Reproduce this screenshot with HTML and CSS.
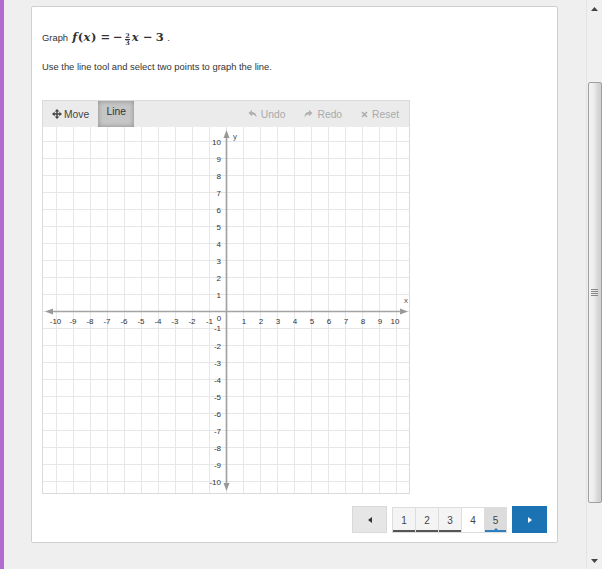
FILE: index.html
```html
<!DOCTYPE html>
<html>
<head>
<meta charset="utf-8">
<link rel="stylesheet" href="styles.css">
</head>
<body>
<div class="accent"></div>
<div class="main">
  <div class="card">
    <p class="q"><span>Graph</span> <span class="math"><i class="mi">f</i><span class="mo">(</span><i class="mi">x</i><span class="mo">)</span><span class="rel">=</span><span class="neg">−</span><span class="frac"><span class="num">2</span><span class="den">3</span></span><i class="mi">x</i><span class="bin">−</span><span class="mn">3</span></span> <span class="dot">.</span></p>
    <p class="instr">Use the line tool and select two points to graph the line.</p>
    <div class="graph">
      <div class="toolbar">
        <div class="tool tool-move">
          <svg class="ico" width="10" height="10" viewBox="0 0 10 10"><path d="M5 0L7.3 2.6H5.7V4.3H7.4V2.7L10 5L7.4 7.3V5.7H5.7V7.4H7.3L5 10L2.7 7.4H4.3V5.7H2.6V7.3L0 5L2.6 2.7V4.3H4.3V2.6H2.7Z" fill="#444"/></svg>
          <span>Move</span>
        </div>
        <div class="tool tool-line">Line</div>
        <div class="actions">
          <div class="act">
            <svg width="9" height="8" viewBox="0 0 9 8"><path d="M0.5 3L4 0V2C6.8 2 8.5 3.8 8.5 7.5C7.6 5.6 6.2 4.6 4 4.6V6.2Z" fill="#b0b0b0"/></svg>
            <span>Undo</span>
          </div>
          <div class="act">
            <svg width="9" height="8" viewBox="0 0 9 8"><path d="M8.5 3L5 0V2C2.2 2 0.5 3.8 0.5 7.5C1.4 5.6 2.8 4.6 5 4.6V6.2Z" fill="#b0b0b0"/></svg>
            <span>Redo</span>
          </div>
          <div class="act">
            <svg width="7" height="7" viewBox="0 0 7 7"><path d="M1 1L6 6M6 1L1 6" stroke="#aaa" stroke-width="1.5"/></svg>
            <span>Reset</span>
          </div>
        </div>
      </div>
      <svg class="plane" width="366" height="366" viewBox="0 0 366 366">
        <defs>
          <pattern id="grid" x="13" y="14" width="17" height="17" patternUnits="userSpaceOnUse">
            <path d="M0.5 0V17M0 0.5H17" stroke="#e7e7e7" stroke-width="1" fill="none"/>
          </pattern>
        </defs>
        <rect width="366" height="366" fill="url(#grid)"/>
        <path d="M8 184.5H359M183.5 9V358" stroke="#a4a4a4" stroke-width="1.7" fill="none"/>
        <polygon points="2,184.5 10,181.5 10,187.5" fill="#999"/>
        <polygon points="365,184.5 357,181.5 357,187.5" fill="#999"/>
        <polygon points="183.5,3 180.5,11 186.5,11" fill="#999"/>
        <polygon points="183.5,364 180.5,356 186.5,356" fill="#999"/>
        <g class="xl">
          <text x="12.5" y="197">-10</text>
          <text x="30" y="197">-9</text>
          <text x="47" y="197">-8</text>
          <text x="64" y="197">-7</text>
          <text x="81" y="197">-6</text>
          <text x="98" y="197">-5</text>
          <text x="115" y="197">-4</text>
          <text x="132" y="197">-3</text>
          <text x="149" y="197">-2</text>
          <text x="166.5" y="197">-1</text>
          <text x="201" y="197">1</text>
          <text x="218" y="197">2</text>
          <text x="235" y="197">3</text>
          <text x="252" y="197">4</text>
          <text x="269" y="197">5</text>
          <text x="286" y="197">6</text>
          <text x="303" y="197">7</text>
          <text x="320" y="197">8</text>
          <text x="337" y="197">9</text>
          <text x="352" y="197">10</text>
          <text x="176" y="194">0</text>
        </g>
        <g class="yl">
          <text x="178" y="17.5">10</text>
          <text x="178" y="34.5">9</text>
          <text x="178" y="51.5">8</text>
          <text x="178" y="68.5">7</text>
          <text x="178" y="85.5">6</text>
          <text x="178" y="102.5">5</text>
          <text x="178" y="119.5">4</text>
          <text x="178" y="136.5">3</text>
          <text x="178" y="153.5">2</text>
          <text x="178" y="170.5">1</text>
          <text x="178" y="204">-1</text>
          <text x="178" y="221.5">-2</text>
          <text x="178" y="238.5">-3</text>
          <text x="178" y="255.5">-4</text>
          <text x="178" y="272.5">-5</text>
          <text x="178" y="289.5">-6</text>
          <text x="178" y="306.5">-7</text>
          <text x="178" y="323.5">-8</text>
          <text x="178" y="340.5">-9</text>
          <text x="178" y="357.5">-10</text>
        </g>
        <text class="axl" x="361" y="176">x</text>
        <text class="axl" x="190" y="12">y</text>
      </svg>
    </div>
    <div class="pager">
      <div class="pbtn prev"><svg width="4" height="6" viewBox="0 0 4 6"><path d="M4 0V6L0 3Z" fill="#333"/></svg></div>
      <div class="pages">
        <div class="page done">1</div>
        <div class="page done">2</div>
        <div class="page done">3</div>
        <div class="page open">4</div>
        <div class="page current">5</div>
      </div>
      <div class="pbtn next"><svg width="4" height="6" viewBox="0 0 4 6"><path d="M0 0V6L4 3Z" fill="#fff"/></svg></div>
    </div>
  </div>
</div>
<div class="scrollbar">
  <div class="sb-arrow"><svg width="7" height="4" viewBox="0 0 7 4"><path d="M3.5 0L7 4H0Z" fill="#444"/></svg></div>
  <div class="sb-gap"></div>
  <div class="sb-thumb"><span class="grip"></span></div>
  <div class="sb-fill"></div>
  <div class="sb-arrow"><svg width="7" height="4" viewBox="0 0 7 4"><path d="M0 0H7L3.5 4Z" fill="#444"/></svg></div>
</div>
</body>
</html>
```

FILE: styles.css
```css
html, body {
  margin: 0;
  padding: 0;
}
body {
  display: flex;
  width: 602px;
  height: 569px;
  overflow: hidden;
  background: #efefef;
  font-family: "Liberation Sans", Arial, sans-serif;
  color: #333;
}
.accent {
  width: 4px;
  flex: none;
  background: #b36bcf;
}
.main {
  flex: 1;
  padding: 6px 0 0 27px;
}
.card {
  width: 527px;
  box-sizing: border-box;
  background: #fff;
  border: 1px solid #cfcfcf;
  border-radius: 2px;
  padding: 23px 10px 9px 10px;
}
.q {
  margin: 0;
  font-size: 9.4px;
  line-height: 14px;
  height: 14px;
  white-space: nowrap;
}
.math {
  font-family: "DejaVu Serif", "Liberation Serif", serif;
  font-weight: bold;
  font-size: 11.5px;
  line-height: 14px;
  margin-left: 1px;
}
.mi {
  font-style: italic;
  padding: 0 0.5px;
}
.mo {
  font-style: normal;
}
.rel {
  margin: 0 3px 0 4px;
}
.neg {
  margin-right: 1px;
}
.bin {
  margin: 0 3px 0 4px;
}
.frac {
  display: inline-flex;
  flex-direction: column;
  align-items: center;
  vertical-align: 3px;
  font-size: 6.5px;
  line-height: 6px;
  margin: 0 1px;
}
.num {
  border-bottom: 1px solid #333;
  padding: 0 0.5px;
}
.dot {
  margin-left: 1px;
}
.instr {
  margin: 16px 0 0 0;
  font-size: 9.4px;
  line-height: 14px;
  color: #333;
}
.graph {
  margin-top: 26px;
  width: 368px;
  box-sizing: border-box;
  border: 1px solid #dadada;
}
.toolbar {
  height: 26px;
  display: flex;
  align-items: stretch;
  background: #ebebeb;
  font-size: 10.3px;
  color: #444;
}
.tool {
  display: flex;
  align-items: center;
}
.tool-move {
  padding-left: 9px;
  gap: 2px;
}
.tool-line {
  margin-left: 9px;
  width: 36px;
  justify-content: center;
  align-items: flex-start;
  padding-top: 5px;
  box-sizing: border-box;
  background: #c6c6c6;
  box-shadow: inset 0 0 5px rgba(0, 0, 0, 0.3);
  color: #333;
}
.actions {
  margin-left: auto;
  display: flex;
  align-items: center;
  gap: 19px;
  padding-right: 10px;
  color: #aaa;
}
.act {
  display: flex;
  align-items: center;
  gap: 4px;
}
.plane {
  display: block;
}
.xl text, .yl text, .axl {
  font-family: "Liberation Sans", Arial, sans-serif;
  font-size: 8px;
  fill: #333;
}
.xl text {
  text-anchor: middle;
}
.yl text {
  text-anchor: end;
}
.axl {
  fill: #555;
}
.pager {
  margin-top: 12px;
  display: flex;
  justify-content: flex-end;
  align-items: flex-start;
  gap: 5px;
}
.pbtn {
  width: 35px;
  height: 27px;
  box-sizing: border-box;
  display: flex;
  align-items: center;
  justify-content: center;
}
.prev {
  background: #e6e6e6;
  border: 1px solid #d9d9d9;
}
.next {
  background: #1b73b3;
}
.pages {
  display: flex;
  margin-top: 1px;
}
.page {
  position: relative;
  width: 23px;
  height: 26px;
  box-sizing: border-box;
  border: 1px solid #dddddd;
  border-right: none;
  display: flex;
  align-items: center;
  justify-content: center;
  font-size: 10px;
  color: #444;
}
.page:last-child {
  border-right: 1px solid #dddddd;
}
.done {
  background: #f4f4f4;
  box-shadow: inset 0 -2px 0 #555;
}
.open {
  background: #fff;
}
.current {
  background: #dcdcdc;
  box-shadow: inset 0 -2px 0 #2d7fc0;
}
.current::after {
  content: "";
  position: absolute;
  left: 50%;
  bottom: 2px;
  margin-left: -2px;
  border-left: 2px solid transparent;
  border-right: 2px solid transparent;
  border-bottom: 2px solid #2d7fc0;
}
.scrollbar {
  width: 16px;
  flex: none;
  display: flex;
  flex-direction: column;
  align-items: center;
  background: #f0f0f0;
  border-left: 1px solid #e4e4e4;
  box-sizing: border-box;
}
.sb-arrow {
  height: 17px;
  flex: none;
  display: flex;
  align-items: center;
  justify-content: center;
}
.sb-gap {
  height: 65px;
  flex: none;
}
.sb-thumb {
  width: 14px;
  height: 421px;
  flex: none;
  box-sizing: border-box;
  border: 1px solid #a0a0a0;
  border-radius: 2px;
  background: linear-gradient(to right, #f3f3f3 0%, #ececec 40%, #d6d6d6 75%, #cfcfcf 100%);
  display: flex;
  align-items: center;
  justify-content: center;
}
.grip {
  width: 7px;
  height: 7px;
  background: repeating-linear-gradient(to bottom, #8a8a8a 0, #8a8a8a 1px, transparent 1px, transparent 2px);
}
.sb-fill {
  flex: 1;
}
```
